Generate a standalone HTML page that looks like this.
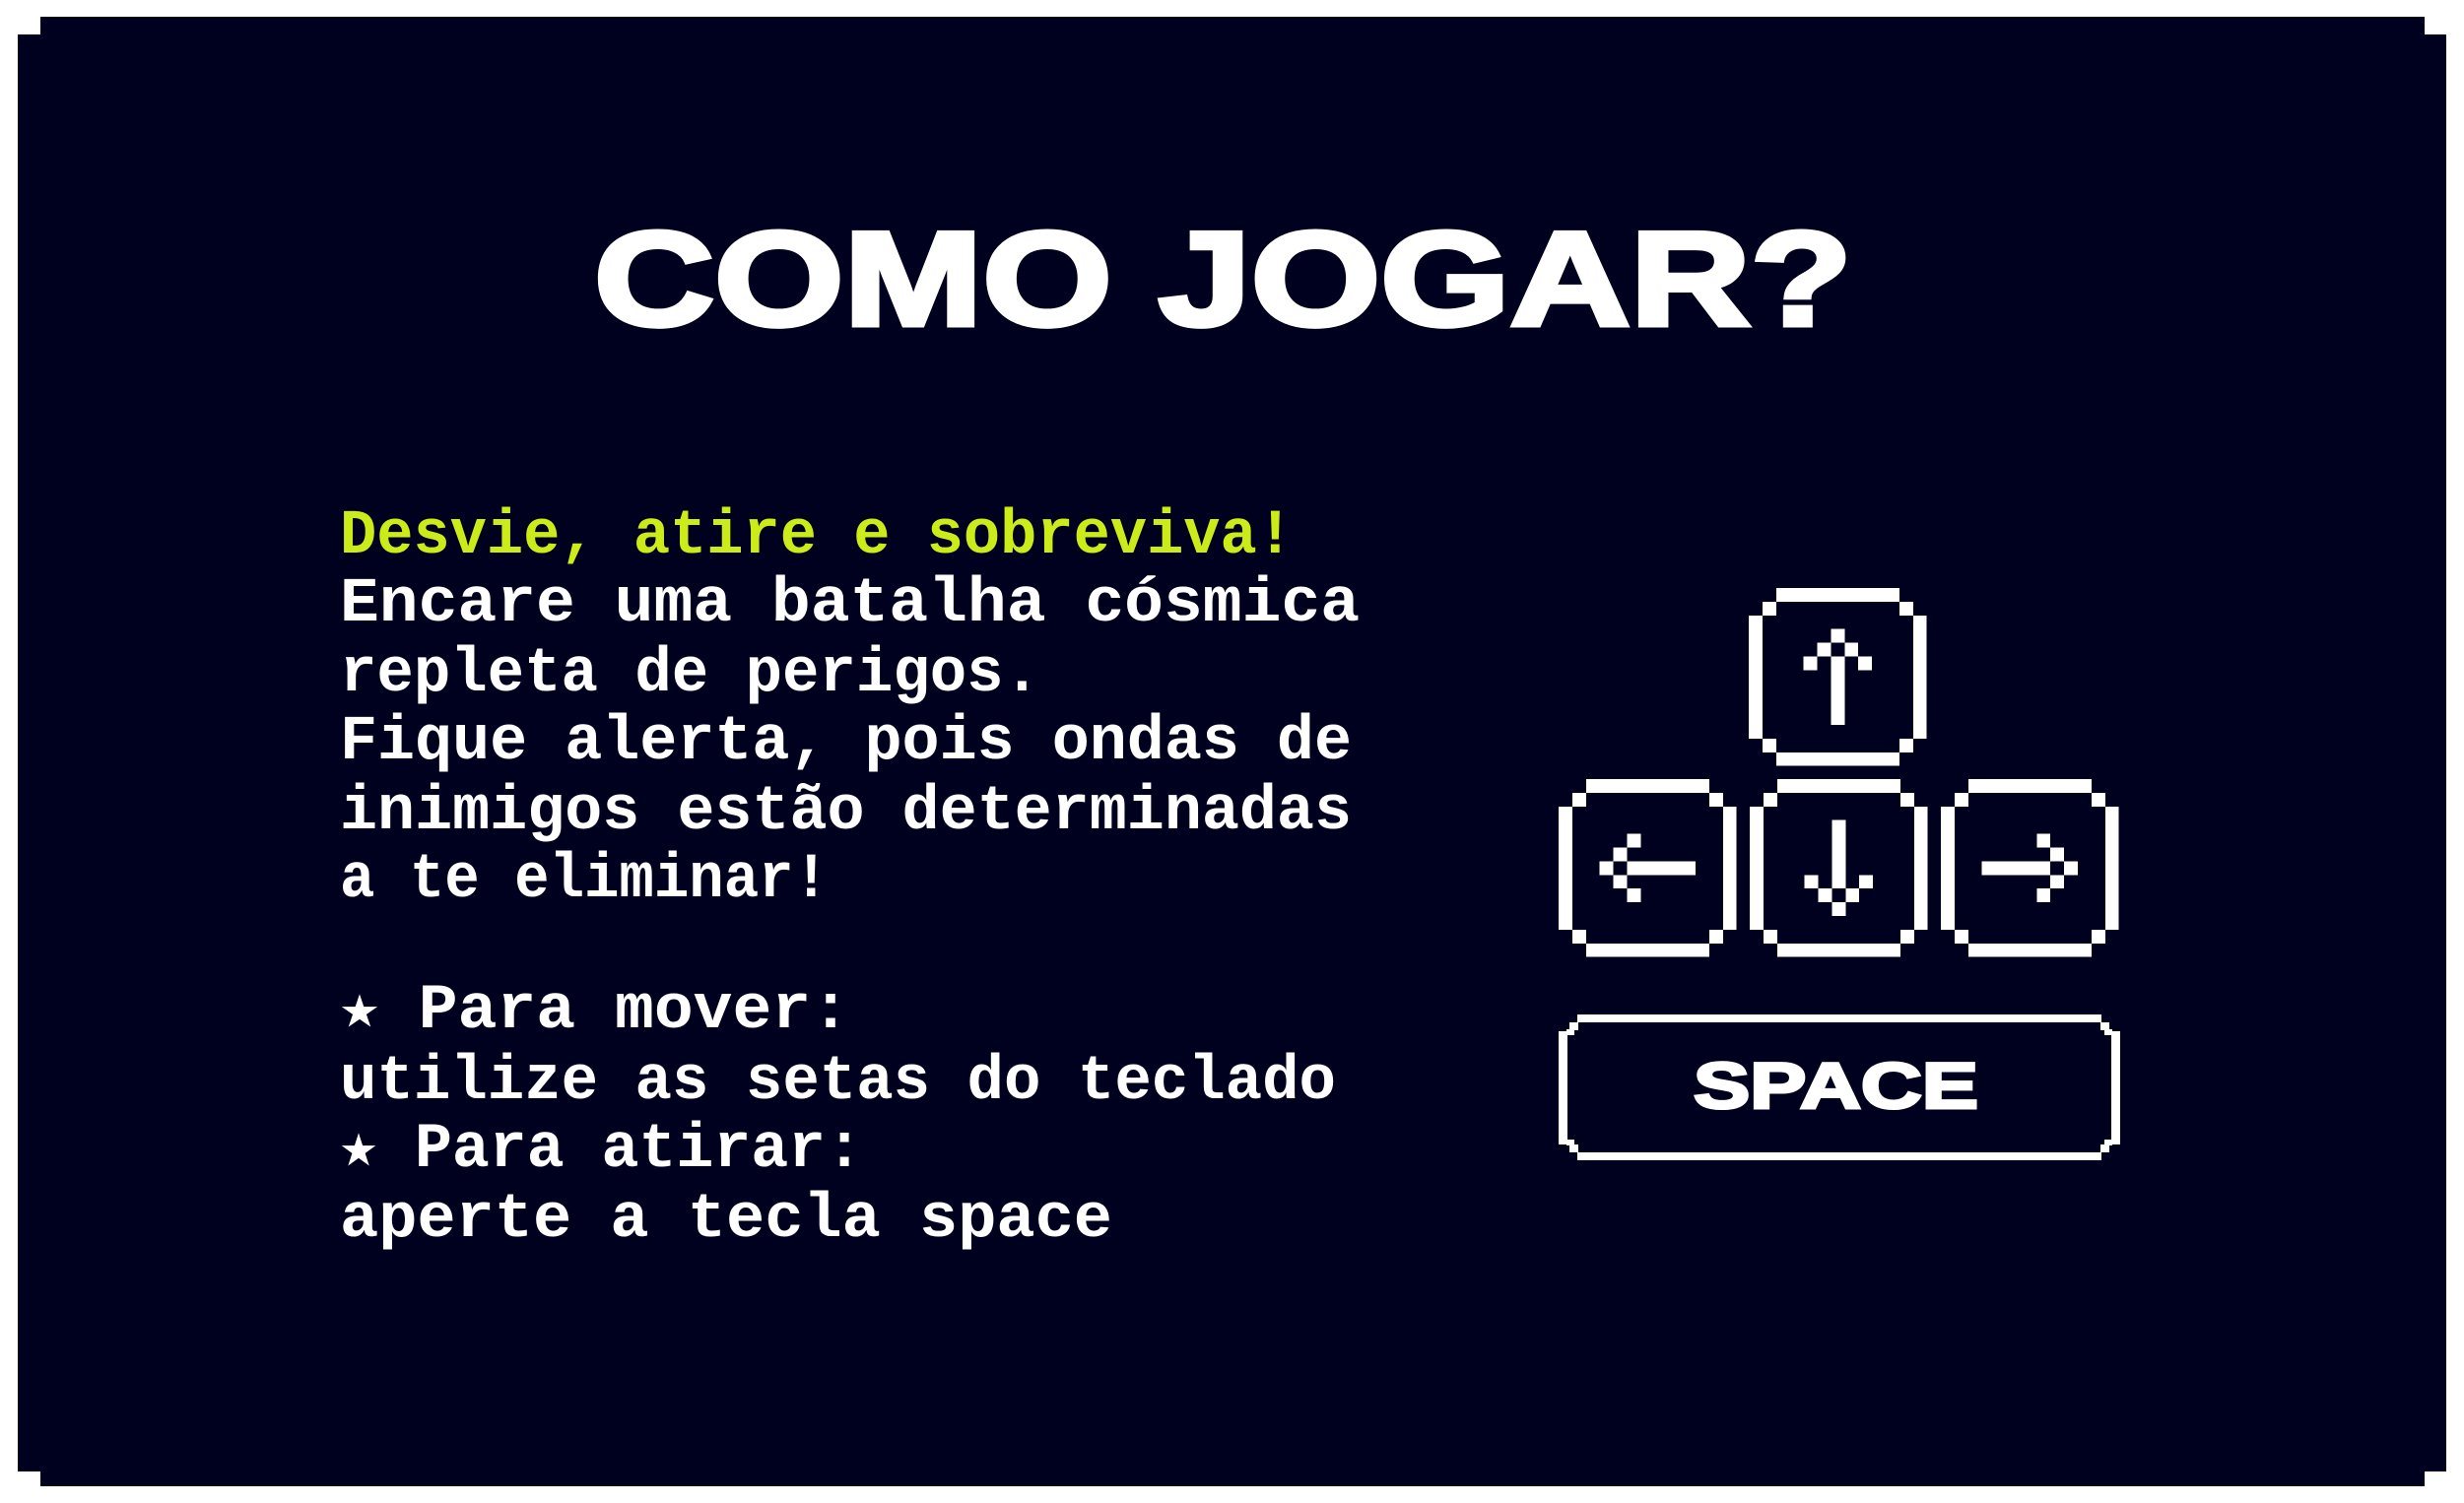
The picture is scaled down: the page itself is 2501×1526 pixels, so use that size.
<!DOCTYPE html>
<html><head><meta charset="utf-8"><style>
html,body{margin:0;padding:0;background:#fff;width:2501px;height:1526px;overflow:hidden}
svg{display:block}
</style></head><body>
<svg width="2501" height="1526" viewBox="0 0 2501 1526" xmlns="http://www.w3.org/2000/svg" shape-rendering="crispEdges">
<rect x="0" y="0" width="2501" height="1526" fill="#fff"/>
<rect x="41" y="17" width="2420" height="1492" fill="#00011f"/>
<rect x="18" y="35" width="2465" height="1459" fill="#00011f"/>

<text x="603" y="330" font-family="Liberation Sans, sans-serif" font-weight="bold" font-size="136" fill="#fff" stroke="#fff" stroke-width="5" textLength="1277" lengthAdjust="spacingAndGlyphs">COMO JOGAR?</text>

<g font-family="Liberation Mono, DejaVu Sans Mono, monospace" font-weight="bold" font-size="64" fill="#fff">
<text x="345" y="561" fill="#cbec19" textLength="968" lengthAdjust="spacingAndGlyphs">Desvie, atire e sobreviva!</text>
<text x="345" y="630" textLength="1035" lengthAdjust="spacingAndGlyphs">Encare uma batalha cósmica</text>
<text x="345" y="701" textLength="711" lengthAdjust="spacingAndGlyphs">repleta de perigos.</text>
<text x="345" y="770" textLength="1027" lengthAdjust="spacingAndGlyphs">Fique alerta, pois ondas de</text>
<text x="345" y="841" textLength="1027" lengthAdjust="spacingAndGlyphs">inimigos estão determinadas</text>
<text x="345" y="910" textLength="496" lengthAdjust="spacingAndGlyphs">a te eliminar!</text>
<text x="345" y="1043" textLength="518" lengthAdjust="spacingAndGlyphs">★ Para mover:</text>
<text x="345" y="1115" textLength="1011" lengthAdjust="spacingAndGlyphs">utilize as setas do teclado</text>
<text x="345" y="1184" textLength="531" lengthAdjust="spacingAndGlyphs">★ Para atirar:</text>
<text x="345" y="1255" textLength="784" lengthAdjust="spacingAndGlyphs">aperte a tecla space</text>
</g>

<defs>
<g id="frame" fill="#fff">
<rect x="2" y="0" width="9" height="1"/><rect x="1" y="1" width="1" height="1"/><rect x="11" y="1" width="1" height="1"/>
<rect x="0" y="2" width="1" height="9"/><rect x="12" y="2" width="1" height="9"/>
<rect x="1" y="11" width="1" height="1"/><rect x="11" y="11" width="1" height="1"/><rect x="2" y="12" width="9" height="1"/>
</g>
</defs>

<g transform="translate(1775,597) scale(13.9)" fill="#fff">
<use href="#frame"/>
<rect x="6" y="3" width="1" height="1"/><rect x="5" y="4" width="1" height="1"/><rect x="7" y="4" width="1" height="1"/>
<rect x="4" y="5" width="1" height="1"/><rect x="8" y="5" width="1" height="1"/><rect x="6" y="5" width="1" height="5"/>
</g>
<g transform="translate(1582,791) scale(13.9)" fill="#fff">
<use href="#frame"/>
<rect x="3" y="6" width="1" height="1"/><rect x="4" y="5" width="1" height="1"/><rect x="4" y="7" width="1" height="1"/>
<rect x="5" y="4" width="1" height="1"/><rect x="5" y="8" width="1" height="1"/><rect x="5" y="6" width="5" height="1"/>
</g>
<g transform="translate(1776,791) scale(13.9)" fill="#fff">
<use href="#frame"/>
<rect x="6" y="3" width="1" height="5"/><rect x="4" y="7" width="1" height="1"/><rect x="8" y="7" width="1" height="1"/>
<rect x="5" y="8" width="1" height="1"/><rect x="7" y="8" width="1" height="1"/><rect x="6" y="9" width="1" height="1"/>
</g>
<g transform="translate(1970,791) scale(13.9)" fill="#fff">
<use href="#frame"/>
<rect x="3" y="6" width="5" height="1"/><rect x="7" y="4" width="1" height="1"/><rect x="7" y="8" width="1" height="1"/>
<rect x="8" y="5" width="1" height="1"/><rect x="8" y="7" width="1" height="1"/><rect x="9" y="6" width="1" height="1"/>
</g>

<g fill="#fff">
<rect x="1601" y="1030" width="532" height="8"/>
<rect x="1593" y="1038" width="9" height="8"/><rect x="2132" y="1038" width="9" height="8"/>
<rect x="1590" y="1045" width="8" height="6"/><rect x="2136" y="1045" width="8" height="6"/>
<rect x="1582" y="1047" width="9" height="115"/><rect x="2143" y="1047" width="9" height="115"/>
<rect x="1590" y="1157" width="8" height="6"/><rect x="2136" y="1157" width="8" height="6"/>
<rect x="1593" y="1162" width="9" height="8"/><rect x="2132" y="1162" width="9" height="8"/>
<rect x="1601" y="1170" width="532" height="8"/>
</g>
<text x="1719" y="1125" font-family="Liberation Sans, sans-serif" font-weight="bold" font-size="66" fill="#fff" stroke="#fff" stroke-width="3" textLength="289" lengthAdjust="spacingAndGlyphs">SPACE</text>
</svg>
</body></html>
